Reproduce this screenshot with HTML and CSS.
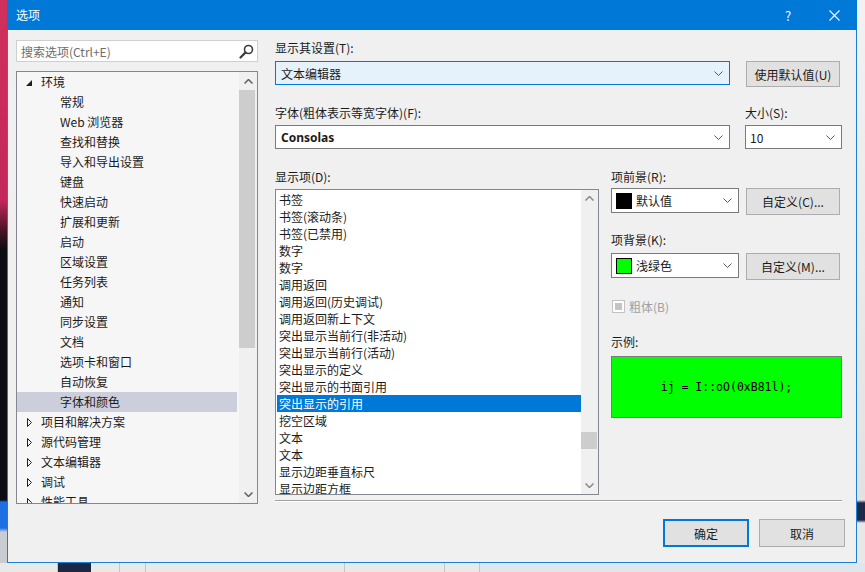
FILE: index.html
```html
<!DOCTYPE html>
<html lang="zh-CN">

<head>
    <meta charset="UTF-8">
    <title>选项</title>
    <link rel="stylesheet" href="styles.css">
</head>

<body>
    <div class="screen">
        <div class="edge-left"></div>

        <div class="dialog">
            <!-- Barra de título -->
            <div class="titlebar">
                <span class="title">选项</span>
                <span class="tb-btn">?</span>
                <span class="tb-btn">
                    <svg width="11" height="11" viewBox="0 0 11 11"><path d="M0.5 0.5 L10.5 10.5 M10.5 0.5 L0.5 10.5" stroke="#fff" stroke-width="1.1" fill="none"/></svg>
                </span>
            </div>

            <div class="dialog-body">
                <!-- Navegación -->
                <div class="nav">
                    <div class="search">
                        <span class="placeholder">搜索选项(Ctrl+E)</span>
                        <svg width="15" height="15" viewBox="0 0 15 15"><circle cx="9.5" cy="5.5" r="4" stroke="#3c3c3c" stroke-width="1.6" fill="none"/><path d="M6.6 8.4 L1.5 13.5" stroke="#3c3c3c" stroke-width="2.2" stroke-linecap="round"/></svg>
                    </div>
                    <div class="tree">
                        <div class="tree-items">
                            <div class="node"><svg class="exp" width="6" height="6" viewBox="0 0 6 6"><polygon points="6,0 6,6 0,6" fill="#1e1e1e"/></svg>环境</div>
                            <div class="leaf">常规</div>
                            <div class="leaf">Web 浏览器</div>
                            <div class="leaf">查找和替换</div>
                            <div class="leaf">导入和导出设置</div>
                            <div class="leaf">键盘</div>
                            <div class="leaf">快速启动</div>
                            <div class="leaf">扩展和更新</div>
                            <div class="leaf">启动</div>
                            <div class="leaf">区域设置</div>
                            <div class="leaf">任务列表</div>
                            <div class="leaf">通知</div>
                            <div class="leaf">同步设置</div>
                            <div class="leaf">文档</div>
                            <div class="leaf">选项卡和窗口</div>
                            <div class="leaf">自动恢复</div>
                            <div class="leaf selected">字体和颜色</div>
                            <div class="node"><svg class="exp" width="6" height="9" viewBox="0 0 6 9"><polygon points="0.5,0.5 4.5,4.5 0.5,8.5" fill="none" stroke="#1e1e1e"/></svg>项目和解决方案</div>
                            <div class="node"><svg class="exp" width="6" height="9" viewBox="0 0 6 9"><polygon points="0.5,0.5 4.5,4.5 0.5,8.5" fill="none" stroke="#1e1e1e"/></svg>源代码管理</div>
                            <div class="node"><svg class="exp" width="6" height="9" viewBox="0 0 6 9"><polygon points="0.5,0.5 4.5,4.5 0.5,8.5" fill="none" stroke="#1e1e1e"/></svg>文本编辑器</div>
                            <div class="node"><svg class="exp" width="6" height="9" viewBox="0 0 6 9"><polygon points="0.5,0.5 4.5,4.5 0.5,8.5" fill="none" stroke="#1e1e1e"/></svg>调试</div>
                            <div class="node"><svg class="exp" width="6" height="9" viewBox="0 0 6 9"><polygon points="0.5,0.5 4.5,4.5 0.5,8.5" fill="none" stroke="#1e1e1e"/></svg>性能工具</div>
                        </div>
                        <div class="vscroll tree-scroll">
                            <div class="arrow"><svg width="9" height="5" viewBox="0 0 9 5"><polyline points="0.5,4.5 4.5,0.5 8.5,4.5" fill="none" stroke="#606060" stroke-width="1.5"/></svg></div>
                            <div class="track"><div class="thumb"></div></div>
                            <div class="arrow"><svg width="9" height="5" viewBox="0 0 9 5"><polyline points="0.5,0.5 4.5,4.5 8.5,0.5" fill="none" stroke="#606060" stroke-width="1.5"/></svg></div>
                        </div>
                    </div>
                </div>

                <!-- Contenido -->
                <div class="main">
                    <div class="label">显示其设置(T):</div>
                    <div class="row">
                        <div class="combo hot w-wide">
                            <span>文本编辑器</span>
                            <svg width="9" height="5" viewBox="0 0 9 5"><polyline points="0.5,0.5 4.5,4.5 8.5,0.5" fill="none" stroke="#555"/></svg>
                        </div>
                        <div class="btn w-btn">使用默认值(U)</div>
                    </div>

                    <div class="row font-row">
                        <div class="w-wide">
                            <div class="label">字体(粗体表示等宽字体)(F):</div>
                            <div class="combo">
                                <span class="bold">Consolas</span>
                                <svg width="9" height="5" viewBox="0 0 9 5"><polyline points="0.5,0.5 4.5,4.5 8.5,0.5" fill="none" stroke="#555"/></svg>
                            </div>
                        </div>
                        <div class="w-size">
                            <div class="label">大小(S):</div>
                            <div class="combo small-pad">
                                <span>10</span>
                                <svg width="9" height="5" viewBox="0 0 9 5"><polyline points="0.5,0.5 4.5,4.5 8.5,0.5" fill="none" stroke="#555"/></svg>
                            </div>
                        </div>
                    </div>

                    <div class="row items-row">
                        <div>
                            <div class="label">显示项(D):</div>
                            <div class="listbox">
                                <div class="list-items">
                                    <div class="item">书签</div>
                                    <div class="item">书签(滚动条)</div>
                                    <div class="item">书签(已禁用)</div>
                                    <div class="item">数字</div>
                                    <div class="item">数字</div>
                                    <div class="item">调用返回</div>
                                    <div class="item">调用返回(历史调试)</div>
                                    <div class="item">调用返回新上下文</div>
                                    <div class="item">突出显示当前行(非活动)</div>
                                    <div class="item">突出显示当前行(活动)</div>
                                    <div class="item">突出显示的定义</div>
                                    <div class="item">突出显示的书面引用</div>
                                    <div class="item selected">突出显示的引用</div>
                                    <div class="item">挖空区域</div>
                                    <div class="item">文本</div>
                                    <div class="item">文本</div>
                                    <div class="item">显示边距垂直标尺</div>
                                    <div class="item">显示边距方框</div>
                                </div>
                                <div class="vscroll list-scroll">
                                    <div class="arrow"><svg width="9" height="5" viewBox="0 0 9 5"><polyline points="0.5,4.5 4.5,0.5 8.5,4.5" fill="none" stroke="#8a8a8a" stroke-width="1.5"/></svg></div>
                                    <div class="track"><div class="thumb"></div></div>
                                    <div class="arrow"><svg width="9" height="5" viewBox="0 0 9 5"><polyline points="0.5,0.5 4.5,4.5 8.5,0.5" fill="none" stroke="#8a8a8a" stroke-width="1.5"/></svg></div>
                                </div>
                            </div>
                        </div>

                        <div class="props">
                            <div class="label">项前景(R):</div>
                            <div class="row prop-row">
                                <div class="combo color-combo">
                                    <span class="swatch black"></span>
                                    <span class="grow">默认值</span>
                                    <svg width="9" height="5" viewBox="0 0 9 5"><polyline points="0.5,0.5 4.5,4.5 8.5,0.5" fill="none" stroke="#555"/></svg>
                                </div>
                                <div class="btn w-btn tall">自定义(C)...</div>
                            </div>

                            <div class="label gap-top">项背景(K):</div>
                            <div class="row prop-row">
                                <div class="combo color-combo">
                                    <span class="swatch green"></span>
                                    <span class="grow">浅绿色</span>
                                    <svg width="9" height="5" viewBox="0 0 9 5"><polyline points="0.5,0.5 4.5,4.5 8.5,0.5" fill="none" stroke="#555"/></svg>
                                </div>
                                <div class="btn w-btn tall">自定义(M)...</div>
                            </div>

                            <div class="check disabled">
                                <span class="box"><span class="mark"></span></span>
                                <span>粗体(B)</span>
                            </div>

                            <div class="label sample-label">示例:</div>
                            <div class="sample">ij = I::oO(0xB81l);</div>
                        </div>
                    </div>

                    <div class="separator"></div>

                    <div class="actions">
                        <div class="btn action default">确定</div>
                        <div class="btn action">取消</div>
                    </div>
                </div>
            </div>
        </div>

        <div class="edge-right"></div>
    </div>

    <div class="taskbar">
        <div class="tb-seg" style="width: 58px"></div>
        <div class="tb-seg dark" style="width: 33px"></div>
        <div class="tb-seg" style="width: 29px"></div>
        <div class="tb-seg" style="width: 26px"></div>
        <div class="tb-seg" style="width: 199px"></div>
        <div class="tb-seg" style="width: 100px"></div>
        <div class="tb-seg" style="width: 35px"></div>
        <div class="tb-seg last"></div>
    </div>
</body>

</html>
```

FILE: styles.css
```css
body {
    margin: 0;
    font-family: "Noto Sans CJK SC", "Noto Sans", sans-serif;
    font-size: 12px;
    color: #1b1b1b;
    background-color: #e6e6e6;
    width: 865px;
    height: 572px;
    overflow: hidden;
}

.screen {
    display: flex;
    height: 563px;
}

.edge-left {
    width: 7px;
    background: linear-gradient(#d2305c 0, #c2285a 200px, #3a1020 235px, #0c0c12 250px, #0c0c12 500px, #1d6fe2 502px, #1d6fe2 528px, #c9ccd3 532px);
}

.edge-right {
    flex: 1;
    background: linear-gradient(#f2f2f2 0, #e2e2e2 500px, #1c2a4a 503px, #1c2a4a 520px, #e8e8e8 523px);
}

.dialog {
    width: 850px;
    box-sizing: border-box;
    border: 1px solid #1a7fd4;
    border-top: none;
    background-color: #f0f0f0;
    display: flex;
    flex-direction: column;
}

.titlebar {
    height: 30px;
    margin: 0 -1px;
    background-color: #0078d7;
    color: #fff;
    display: flex;
    align-items: center;
}

.title {
    flex: 1;
    padding-left: 9px;
    line-height: 30px;
}

.tb-btn {
    width: 46px;
    height: 30px;
    display: flex;
    align-items: center;
    justify-content: center;
    font-size: 13px;
}

.dialog-body {
    display: flex;
    padding: 10px 11px 0 8px;
    gap: 17px;
}

/* Navegación */
.nav {
    width: 242px;
}

.search {
    height: 22px;
    box-sizing: border-box;
    border: 1px solid #cfcfcf;
    background: #fff;
    display: flex;
    align-items: center;
    padding: 0 3px 0 4px;
    margin-bottom: 9px;
}

.placeholder {
    flex: 1;
    color: #6d6d6d;
}

.tree {
    height: 433px;
    box-sizing: border-box;
    border: 1px solid #828790;
    background-color: #f6f6f6;
    display: flex;
}

.tree-items {
    width: 220px;
    margin-right: 2px;
    overflow: hidden;
}

.node,
.leaf {
    height: 20px;
    line-height: 20px;
    white-space: nowrap;
    position: relative;
}

.node {
    padding-left: 24px;
}

.leaf {
    padding-left: 43px;
}

.exp {
    position: absolute;
    left: 10px;
    top: 6px;
}

.node .exp[height="6"] {
    left: 9px;
    top: 8px;
}

.leaf.selected {
    background-color: #cccedb;
}

.vscroll {
    display: flex;
    flex-direction: column;
    background-color: #f0f0f0;
}

.tree-scroll {
    width: 18px;
}

.arrow {
    height: 18px;
    display: flex;
    align-items: center;
    justify-content: center;
}

.track {
    flex: 1;
    position: relative;
}

.thumb {
    position: absolute;
    left: 0;
    width: 16px;
    background-color: #cdcdcd;
}

.tree-scroll .thumb {
    top: 0;
    height: 258px;
}

/* Contenido */
.main {
    width: 570px;
}

.label {
    height: 16px;
    line-height: 16px;
    margin-bottom: 4px;
    white-space: nowrap;
}

.main > .label:first-child {
    margin-bottom: 5px;
}

.row {
    display: flex;
    align-items: flex-start;
}

.row > .w-wide {
    margin-right: 16px;
}

.w-wide {
    width: 455px;
}

.w-btn {
    width: 94px;
}

.font-row {
    margin-top: 18px;
}

.font-row > .w-wide {
    margin-right: 15px;
}

.w-size {
    width: 97px;
}

.combo {
    height: 24px;
    box-sizing: border-box;
    border: 1px solid #7a7a7a;
    background-color: #fff;
    display: flex;
    align-items: center;
    justify-content: space-between;
    padding: 0 6px 0 5px;
}

.combo.hot {
    background-color: #e5f1fb;
    border-color: #0078d7;
}

.combo.small-pad {
    padding-left: 4px;
}

.bold {
    font-weight: bold;
    font-family: "Noto Sans", "Noto Sans CJK SC", sans-serif;
}

.btn {
    height: 26px;
    box-sizing: border-box;
    border: 1px solid #adadad;
    background-color: #e1e1e1;
    display: flex;
    align-items: center;
    justify-content: center;
    white-space: nowrap;
}

.btn.tall {
    height: 27px;
}

.items-row {
    margin-top: 20px;
    gap: 12px;
}

.listbox {
    width: 324px;
    height: 306px;
    box-sizing: border-box;
    border: 1px solid #828790;
    background-color: #fff;
    display: flex;
    padding-left: 1px;
}

.list-items {
    width: 304px;
    padding-top: 1px;
    overflow: hidden;
}

.item {
    height: 17px;
    line-height: 17px;
    padding-left: 2px;
    white-space: nowrap;
}

.item.selected {
    background-color: #0078d7;
    color: #fff;
}

.list-scroll {
    width: 17px;
    height: 304px;
}

.list-scroll .arrow {
    height: 17px;
}

.list-scroll .thumb {
    top: 225px;
    height: 17px;
}

.props {
    width: 231px;
}

.props > .label:first-child {
    margin-bottom: 3px;
}

.prop-row {
    gap: 7px;
}

.color-combo {
    width: 128px;
    height: 25px;
    padding-left: 4px;
    justify-content: flex-start;
}

.grow {
    flex: 1;
}

.swatch {
    width: 14px;
    height: 14px;
    border: 1px solid #000;
    margin-right: 4px;
}

.swatch.black {
    background-color: #000;
}

.swatch.green {
    background-color: #00ff00;
}

.label.gap-top {
    margin-top: 17px;
    margin-bottom: 5px;
}

.check {
    margin-top: 18px;
    height: 16px;
    display: flex;
    align-items: center;
    gap: 4px;
    padding-left: 1px;
}

.check.disabled {
    color: #a0a0a0;
}

.box {
    width: 11px;
    height: 11px;
    border: 1px solid #c2c2c2;
    background-color: #fff;
    display: flex;
    align-items: center;
    justify-content: center;
}

.mark {
    width: 7px;
    height: 7px;
    background-color: #c4c4c4;
}

.label.sample-label {
    margin-top: 20px;
    margin-bottom: 6px;
}

.sample {
    height: 62px;
    box-sizing: border-box;
    border: 1px solid #7a7a7a;
    background-color: #00ff00;
    display: flex;
    align-items: center;
    justify-content: center;
    font-family: "DejaVu Sans Mono", monospace;
    font-size: 11.5px;
    color: #000;
}

.separator {
    width: 567px;
    margin-top: 5px;
    border-top: 1px solid #a0a0a0;
    border-bottom: 1px solid #fff;
}

.actions {
    margin-top: 17px;
    display: flex;
    justify-content: flex-end;
    gap: 10px;
}

.btn.action {
    width: 86px;
    height: 28px;
}

.btn.default {
    border: 2px solid #0078d7;
}

/* Barra inferior */
.taskbar {
    height: 9px;
    display: flex;
    background-color: #e9e9e9;
}

.tb-seg {
    border-right: 1px solid #c4c4c4;
    box-sizing: border-box;
}

.tb-seg.dark {
    background-color: #1b2845;
    border-right: none;
}

.tb-seg.last {
    flex: 1;
    border-right: none;
    background-color: #dfe6ee;
}
```
